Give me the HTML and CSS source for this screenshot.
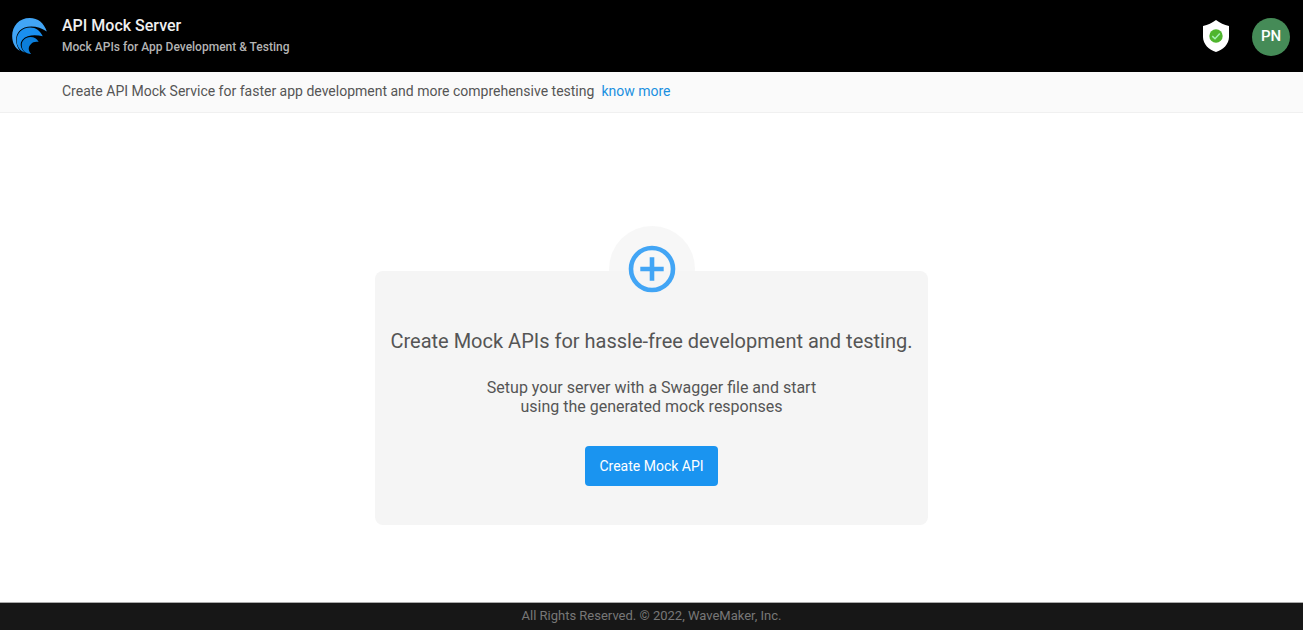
FILE: index.html
```html
<!DOCTYPE html>
<html lang="en">
<head>
<meta charset="utf-8">
<meta name="viewport" content="width=device-width, initial-scale=1">
<title>API Mock Server</title>
<link rel="stylesheet" href="styles.css">
</head>
<body class="page">
<header class="header">
  <svg class="logo" viewBox="0 0 102 106" aria-hidden="true">
    <path fill="#42a5f5" d="M102 40C94 15 76 0 52 0C20 0 0 24 0 53C0 74 9 89 23 97C8 76 8 52 21 38C40 18 78 22 102 40Z"/>
    <path fill="#1a90f0" d="M90 54C82 37 70 28 53 28C29 28 13 45 13 66C13 83 23 96 37 102C24 88 21 74 31 63C43 49 70 48 90 54Z"/>
    <path fill="#0b7edb" d="M78 71C73 61 65 56 54 56C38 56 28 67 28 80C28 95 40 105 56 106C46 95 47 84 55 77C61 71 69 69 78 71Z"/>
  </svg>
  <div class="brand">
    <h1 class="brand-name">API Mock Server</h1>
    <p class="brand-tagline">Mock APIs for App Development &amp; Testing</p>
  </div>
  <div class="account">
    <svg class="shield" viewBox="0 0 26 32" role="img" aria-label="Protected">
      <path fill="#fff" d="M13 0C17 3 21 5 26 6V17C26 24 20 30 13 32C6 30 0 24 0 17V6C5 5 9 3 13 0Z"/>
      <circle cx="13" cy="16" r="6.7" fill="#4fb52d"/>
      <path fill="none" stroke="#a5f0b4" stroke-width="1.5" d="M9.3 16.1L12 18.7L16.8 13.6"/>
    </svg>
    <button class="avatar" type="button" aria-label="Account PN">PN</button>
  </div>
</header>
<div class="notice">
  <span>Create API Mock Service for faster app development and more comprehensive testing</span>
  <a class="notice-link" href="#">know more</a>
</div>
<main class="main">
  <section class="card">
    <div class="badge">
      <svg class="plus" viewBox="0 0 48 48" aria-hidden="true">
        <g fill="none" stroke="#42a5f5" stroke-width="4.6">
          <circle cx="24" cy="24" r="21"/>
          <path d="M24 12.3V35.7M12.3 24H35.7"/>
        </g>
      </svg>
    </div>
    <h2 class="card-title">Create Mock APIs for hassle-free development and testing.</h2>
    <p class="card-text">Setup your server with a Swagger file and start<br>using the generated mock responses</p>
    <button class="create" type="button">Create Mock API</button>
  </section>
</main>
<footer class="footer">All Rights Reserved. © 2022, WaveMaker, Inc.</footer>
</body>
</html>
```
FILE: styles.css
```css
* {
  box-sizing: border-box;
}

.page {
  display: flex;
  flex-direction: column;
  min-height: 100vh;
  margin: 0;
  background: #fff;
  color: #555;
  font-family: Roboto, sans-serif;
  font-size: 14px;
}

.header {
  display: flex;
  align-items: center;
  padding: 15px 13px 15px 12px;
  background: #000;
}

.logo {
  width: 35px;
  height: 36px;
}

.brand {
  margin-left: 15px;
}

.brand-name,
.brand-tagline {
  margin: 0;
  font-weight: 500;
}

.brand-name {
  color: #f0f0f0;
  font-size: 16px;
  line-height: 22px;
}

.brand-tagline {
  color: #b4b4b4;
  font-size: 12px;
  line-height: 20px;
}

.account {
  display: flex;
  align-items: center;
  gap: 23px;
  margin-left: auto;
}

.shield {
  width: 26px;
  height: 32px;
}

.avatar {
  width: 38px;
  height: 38px;
  margin-top: 2px;
  padding: 0 0 2px;
  border: 0;
  border-radius: 50%;
  background: #458b57;
  color: #fff;
  font: 500 15px/36px Roboto, sans-serif;
}

.notice {
  display: flex;
  gap: 7px;
  padding: 9px 62px 11px;
  border-bottom: 1px solid #f0f0f0;
  background: #fafafa;
  line-height: 20px;
}

.notice-link {
  color: #1a90e0;
  text-decoration: none;
}

.main {
  display: flex;
  flex: 1;
  align-items: center;
  justify-content: center;
  padding-top: 80px;
}

.card {
  display: flex;
  flex-direction: column;
  align-items: center;
  padding: 0 15px 39px;
  border-radius: 8px;
  background: #f5f5f5;
  text-align: center;
}

.badge {
  display: flex;
  align-items: center;
  justify-content: center;
  width: 86px;
  height: 86px;
  margin-top: -45px;
  border-radius: 50%;
  background: linear-gradient(#f7f7f7 45px, #f5f5f5 45px);
}

.plus {
  width: 48px;
  height: 48px;
}

.card-title {
  margin: 17px 0 0;
  font-size: 20px;
  font-weight: 400;
  line-height: 24px;
}

.card-text {
  margin: 25px 0 0;
  font-size: 16px;
  line-height: 19px;
}

.create {
  height: 40px;
  margin-top: 30px;
  padding: 0 14px;
  border: 0;
  border-radius: 4px;
  background: #1a94f0;
  color: #fff;
  font: 400 14px/20px Roboto, sans-serif;
}

.footer {
  padding: 3px 0 4px;
  border-top: 1px solid #aaa;
  background: #171717;
  color: #777;
  font-size: 13px;
  line-height: 20px;
  text-align: center;
}
```
